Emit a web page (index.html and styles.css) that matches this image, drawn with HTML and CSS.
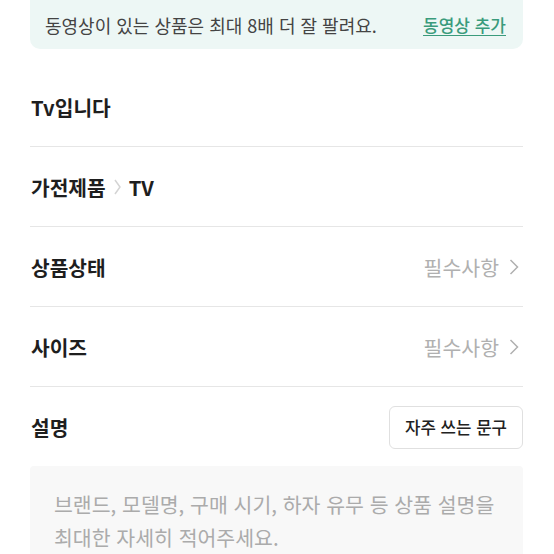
FILE: index.html
```html
<!DOCTYPE html>
<html lang="ko">
<head>
<meta charset="utf-8">
<link rel="stylesheet" href="styles.css">
</head>
<body>
<div class="page">
  <div class="banner">
    <span class="banner-text">동영상이 있는 상품은 최대 8배 더 잘 팔려요.</span>
    <a class="banner-link">동영상 추가</a>
  </div>
  <div class="row row-first">
    <span class="label">Tv입니다</span>
  </div>
  <div class="row">
    <span class="label">가전제품<svg class="crumb" width="7" height="18" viewBox="0 0 7 18"><path d="M1 2 L6 9 L1 16" fill="none" stroke="#d4d4d4" stroke-width="1.5"/></svg>TV</span>
  </div>
  <div class="row">
    <span class="label">상품상태</span>
    <span class="req">필수사항<svg class="chev" width="10" height="20" viewBox="0 0 10 20"><path d="M1.5 3 L8.5 10 L1.5 17" fill="none" stroke="#b0b0b0" stroke-width="1.5"/></svg></span>
  </div>
  <div class="row">
    <span class="label">사이즈</span>
    <span class="req">필수사항<svg class="chev" width="10" height="20" viewBox="0 0 10 20"><path d="M1.5 3 L8.5 10 L1.5 17" fill="none" stroke="#b0b0b0" stroke-width="1.5"/></svg></span>
  </div>
  <div class="row row-last">
    <span class="label">설명</span>
    <button class="phrase-btn">자주 쓰는 문구</button>
  </div>
  <div class="desc">
    <p class="placeholder">브랜드, 모델명, 구매 시기, 하자 유무 등 상품 설명을<br>최대한 자세히 적어주세요.</p>
  </div>
</div>
</body>
</html>
```

FILE: styles.css
```css
* { box-sizing: border-box; }
html, body { margin: 0; padding: 0; background: #fff; }
body {
  font-family: "Noto Sans CJK KR", "Noto Sans", sans-serif;
  color: #1e1e1e;
  overflow: hidden;
}
.page {
  padding: 0 31px 0 30px;
}
.banner {
  height: 49px;
  background: #edf7f5;
  border-radius: 0 0 10px 10px;
  display: flex;
  align-items: center;
  justify-content: space-between;
  padding: 0 17px 0 15px;
}
.banner-text {
  font-size: 18px;
  color: #444;
}
.banner-link {
  font-size: 17px;
  font-weight: 500;
  color: #3a9b7c;
  text-decoration: underline;
  text-underline-offset: 3px;
}
.row {
  height: 80px;
  border-bottom: 1px solid #e6e6e6;
  display: flex;
  align-items: center;
  justify-content: space-between;
  padding: 0 1px;
}
.row-first { margin-top: 18px; }
.row-last { border-bottom: none; }
.label {
  font-size: 20.3px;
  font-weight: 700;
  color: #1e1e1e;
  display: flex;
  align-items: center;
}
.crumb { margin: 0 8px 0 8px; }
.req {
  font-size: 20.5px;
  color: #b0b0b0;
  display: flex;
  align-items: center;
}
.chev { margin-left: 10px; margin-right: 3px; }
.phrase-btn {
  font-family: inherit;
  height: 43px;
  width: 134px;
  margin-right: -1px;
  padding: 0;
  background: #fff;
  border: 1px solid #e0e0e0;
  border-radius: 6px;
  font-size: 16.8px;
  font-weight: 500;
  color: #222;
}
.desc {
  margin-top: -1px;
  background: #f8f8f8;
  border-radius: 4px;
  height: 120px;
  padding: 22px 24px;
}
.placeholder {
  margin: 0;
  font-size: 20.5px;
  line-height: 33px;
  color: #ababab;
  white-space: nowrap;
}
```
